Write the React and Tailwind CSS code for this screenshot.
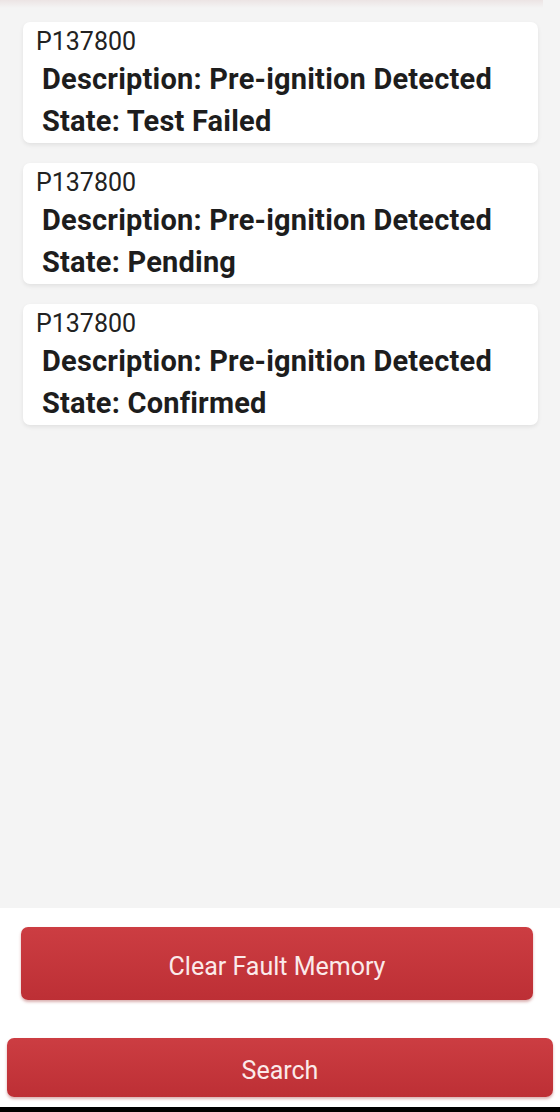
import React from 'react';

// fault entries shown in the list
const faults = [
  { code: 'P137800', description: 'Pre-ignition Detected', state: 'Test Failed' },
  { code: 'P137800', description: 'Pre-ignition Detected', state: 'Pending' },
  { code: 'P137800', description: 'Pre-ignition Detected', state: 'Confirmed' },
];

function FaultCard({ code, description, state }) {
  return (
    <div className="bg-white rounded-[7px] shadow-[0_2px_4px_rgba(0,0,0,0.08)] h-[121px] pt-[5px]">
      <div className="pl-[13px] text-[25px] leading-[30px] text-[#222]">{code}</div>
      <div className="pl-[19px] text-[29px] leading-[44px] font-bold text-[#1d1d1d] tracking-[0.2px]">
        Description: {description}
      </div>
      <div className="pl-[19px] text-[29px] leading-[40px] font-bold text-[#1d1d1d] tracking-[0.2px]">
        State: {state}
      </div>
    </div>
  );
}

export default function App() {
  return (
    <div className="w-[560px] h-[1112px] flex flex-col bg-[#f4f4f4] font-['Roboto',sans-serif] overflow-hidden">
      {/* shadow of the header above the list */}
      <div className="h-[8px] mr-[17px] bg-gradient-to-b from-[#ece4e4] to-[#f4f4f4]" />

      {/* fault list */}
      <div className="flex-1 flex flex-col gap-[20px] pt-[14px] pl-[23px] pr-[22px]">
        {faults.map((f, i) => (
          <FaultCard key={i} {...f} />
        ))}
      </div>

      {/* action buttons */}
      <div className="h-[199px] bg-white flex flex-col pt-[19px]">
        <button className="ml-[21px] mr-[27px] h-[73px] pt-[6px] rounded-[7px] bg-gradient-to-b from-[#cc3d42] to-[#bd2f35] shadow-[0_2px_3px_rgba(150,30,30,0.35)] text-[25px] text-[#fbeaea]">
          Clear Fault Memory
        </button>
        <button className="mt-[38px] ml-[7px] mr-[7px] h-[59px] pt-[6px] rounded-[7px] bg-gradient-to-b from-[#cc3d42] to-[#bd2f35] shadow-[0_2px_3px_rgba(150,30,30,0.35)] text-[25px] text-[#fbeaea]">
          Search
        </button>
      </div>
      <div className="h-[5px] bg-black" />
    </div>
  );
}
